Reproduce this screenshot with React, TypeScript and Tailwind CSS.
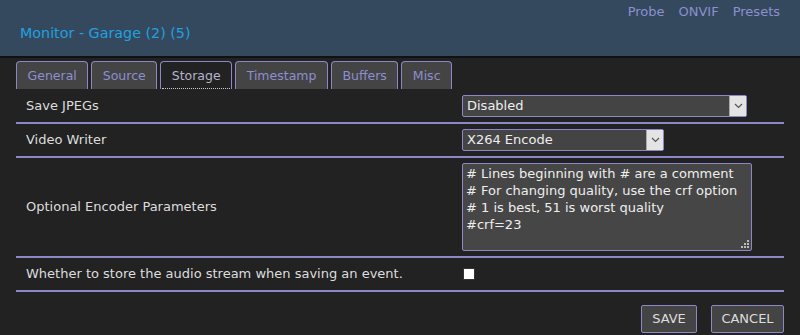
import { ReactNode } from 'react';

const tabs = ['General', 'Source', 'Storage', 'Timestamp', 'Buffers', 'Misc'];

function Chevron() {
  return (
    <svg width="9" height="6" viewBox="0 0 9 6" fill="none">
      <path d="M1 1l3.5 3.5L8 1" stroke="#555" strokeWidth="1.2" />
    </svg>
  );
}

function Select({ value, width }: { value: string; width: string }) {
  return (
    <div className={`flex h-[22px] ${width} border border-[#8c88c8] bg-[#444] rounded-[2px]`}>
      <div className="flex-1 pl-[4px] text-[13px] leading-[20px] text-[#eee]">{value}</div>
      <div className="w-[17px] flex items-center justify-center bg-[#e4e4e4] border-l border-[#aaa]">
        <Chevron />
      </div>
    </div>
  );
}

function Row({ label, height, children }: { label: string; height: string; children: ReactNode }) {
  return (
    <div className={`flex items-center ${height} border-b-2 border-[#8c88c8]`}>
      <div className="w-[446px] pl-[10px] text-[13px] text-[#ddd]">{label}</div>
      <div className="flex-1">{children}</div>
    </div>
  );
}

export default function App() {
  return (
    <div className="w-[800px] h-[335px] overflow-hidden bg-[#222] font-['DejaVu_Sans',sans-serif]">
      <header className="h-[58px] bg-[#34495e] border-b-2 border-[#111] flex flex-col">
        <nav className="flex justify-end gap-[14px] pr-[20px] pt-[2px] text-[13px] text-[#8c8fd0]">
          <span>Probe</span>
          <span>ONVIF</span>
          <span>Presets</span>
        </nav>
        <h1 className="pl-[20px] mt-[1px] text-[14.3px] text-[#22a0e0]">Monitor - Garage (2) (5)</h1>
      </header>

      <div className="flex gap-[3px] px-[16px] pt-[3px]">
        {tabs.map((t) => (
          <div
            key={t}
            className={
              t === 'Storage'
                ? 'h-[28px] px-[10.5px] border border-b-0 border-[#8c88c8] rounded-t-[4px] bg-[#222] text-[12.5px] leading-[27px] text-[#b4b4cc] relative'
                : 'h-[28px] px-[10.5px] border border-b-0 border-[#8c88c8] rounded-t-[4px] bg-[#444] text-[12.5px] leading-[27px] text-[#8c8fd0]'
            }
          >
            {t}
            {t === 'Storage' && (
              <span className="absolute left-[1px] right-[1px] bottom-0 border-b border-dotted border-[#ccc]" />
            )}
          </div>
        ))}
      </div>

      <div className="mx-[16px]">
        <Row label="Save JPEGs" height="h-[35px]">
          <Select value="Disabled" width="w-[285px]" />
        </Row>
        <Row label="Video Writer" height="h-[34px]">
          <Select value="X264 Encode" width="w-[202px]" />
        </Row>
        <Row label="Optional Encoder Parameters" height="h-[100px]">
          <div className="relative w-[290px] h-[88px] border border-[#8c88c8] bg-[#464646] rounded-[2px] px-[3px] pt-[1px] text-[13px] leading-[17px] text-[#eee] whitespace-pre">
            {'# Lines beginning with # are a comment\n# For changing quality, use the crf option\n# 1 is best, 51 is worst quality\n#crf=23'}
            <svg className="absolute right-[2px] bottom-[2px]" width="8" height="8" viewBox="0 0 8 8">
              <rect x="6" y="0" width="2" height="2" fill="#bbb" />
              <rect x="3" y="3" width="2" height="2" fill="#bbb" />
              <rect x="6" y="3" width="2" height="2" fill="#bbb" />
              <rect x="0" y="6" width="2" height="2" fill="#bbb" />
              <rect x="3" y="6" width="2" height="2" fill="#bbb" />
              <rect x="6" y="6" width="2" height="2" fill="#bbb" />
            </svg>
          </div>
        </Row>
        <Row label="Whether to store the audio stream when saving an event." height="h-[34px]">
          <div className="ml-[1px] w-[12px] h-[12px] bg-white border border-[#333]" />
        </Row>

        <div className="flex justify-end gap-[14px] pt-[13px]">
          <button className="h-[28px] w-[56px] border border-[#8c88c8] bg-[#444] rounded-[2px] text-[13px] text-[#ddd]">SAVE</button>
          <button className="h-[28px] w-[73px] border border-[#8c88c8] bg-[#444] rounded-[2px] text-[13px] text-[#ddd]">CANCEL</button>
        </div>
      </div>
    </div>
  );
}
